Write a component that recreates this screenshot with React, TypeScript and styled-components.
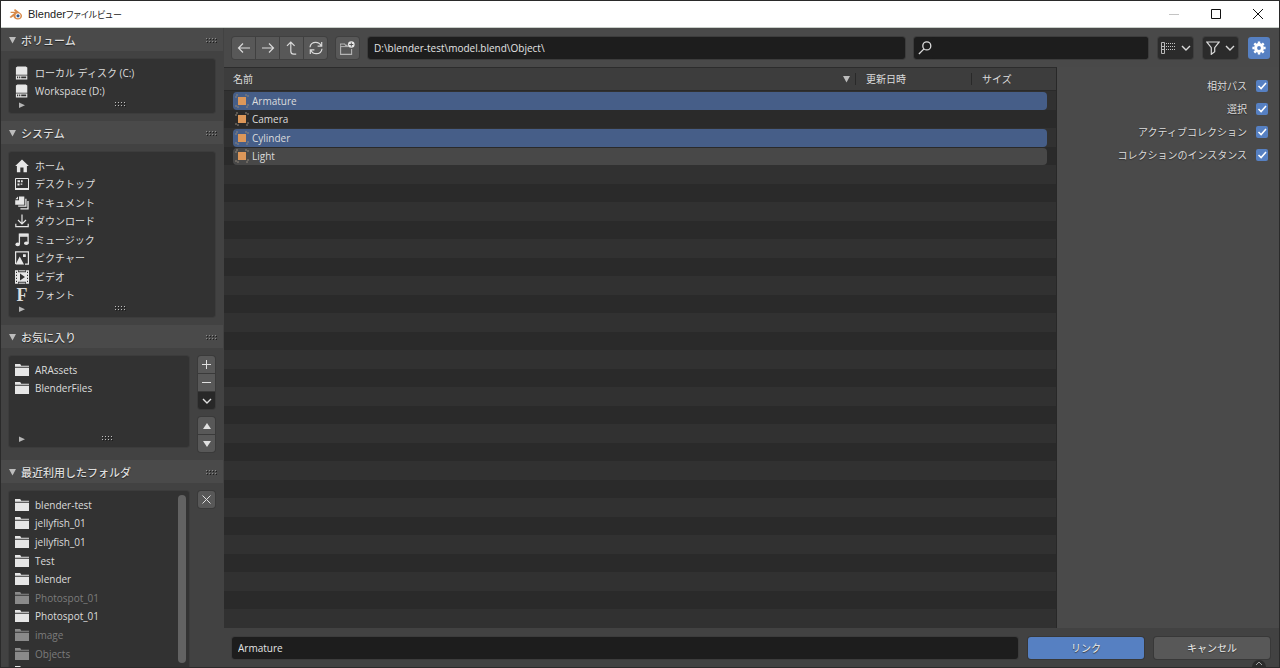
import React, { useState } from 'react';
import styled, { createGlobalStyle, css } from 'styled-components';

const GlobalStyle = createGlobalStyle`
  *, *::before, *::after { box-sizing: border-box; }
  body { margin: 0; background: #2a2a2a; }
  button, input, table { font: inherit; color: inherit; }
`;

const uiFont = '"Open Sans", "Noto Sans CJK JP", sans-serif';

/* ---------- window frame ---------- */

const Window = styled.div`
  display: flex;
  flex-direction: column;
  height: 100vh;
  border: 1px solid #2a2a2a;
  background: #424242;
  color: #dcdcdc;
  font: 10px/14px ${uiFont};
  overflow: hidden;
`;

const TitleBar = styled.header`
  display: flex;
  flex: none;
  align-items: center;
  height: 27px;
  padding-left: 8px;
  background: #fff;
  color: #222;
  border-bottom: 1px solid #c9cfc9;
`;

const WindowTitle = styled.h1`
  flex: 1;
  margin: 0 0 0 5px;
  font: 400 11px/16px "Liberation Sans", "Noto Sans CJK JP", sans-serif;
`;

const TitleKana = styled.span`
  font-size: 9px;
  font-feature-settings: "palt";
`;

const WindowButton = styled.button<{ $muted?: boolean }>`
  display: grid;
  place-items: center;
  width: 42px;
  height: 26px;
  padding: 0;
  border: 0;
  background: none;
  color: ${(p) => (p.$muted ? '#c4c4c4' : '#111')};
`;

const Body = styled.div`
  display: flex;
  flex: 1;
  min-height: 0;
`;

/* ---------- sidebar ---------- */

const Sidebar = styled.aside`
  flex: none;
  width: 222px;
  overflow: hidden;
`;

const PanelHeader = styled.h2`
  display: flex;
  align-items: center;
  gap: 5px;
  height: 23px;
  margin: 0;
  padding: 2px 6px 0 8px;
  background: #4a4a4a;
  font-size: 11px;
  font-weight: 500;
  line-height: 16px;
  text-shadow: 0 1px 1px #222;
`;

const PanelTitle = styled.span`
  flex: 1;
`;

const PanelBody = styled.div`
  display: flex;
  gap: 9px;
  align-items: flex-start;
  padding: 8px;
`;

const ListBox = styled.div`
  display: flex;
  flex: 1;
  align-items: flex-start;
  border-radius: 3px;
  background: #323232;
  box-shadow: 0 0 0 1px #3c3c3c;
`;

const ListColumn = styled.div`
  flex: 1;
  padding: 4px 0;
`;

const List = styled.ul<{ $height: number }>`
  display: grid;
  grid-auto-rows: 1fr;
  height: ${(p) => p.$height}px;
  margin: 0;
  padding: 0;
  list-style: none;
`;

const ListItem = styled.li<{ $dim?: boolean }>`
  display: flex;
  align-items: center;
  gap: 6px;
  padding: 1px 0 0 6px;
  white-space: nowrap;
  color: ${(p) => (p.$dim ? '#7c7c7c' : '#dcdcdc')};

  svg { color: ${(p) => (p.$dim ? '#8a8a8a' : '#e6e6e6')}; }
`;

const ListFooter = styled.div`
  display: flex;
  align-items: center;
  height: 9px;
  padding-left: 10px;
  color: #b5b5b5;
`;

const GripSlot = styled.span`
  display: flex;
  flex: 1;
  justify-content: center;
`;

const ScrollThumb = styled.div`
  width: 8px;
  height: 168px;
  margin: 4px 3px 0 0;
  border-radius: 4px;
  background: #626262;
`;

const SideButtons = styled.div`
  display: flex;
  flex-direction: column;
  gap: 8px;
  width: 17px;
`;

const SideGroup = styled.div`
  display: flex;
  flex-direction: column;
  gap: 1px;
  border-radius: 3px;
  overflow: hidden;
  box-shadow: 0 0 0 1px #3a3a3a;
  background: #3a3a3a;
`;

const SideButton = styled.button<{ $dark?: boolean }>`
  display: grid;
  place-items: center;
  height: 17px;
  padding: 0;
  border: 0;
  background: ${(p) => (p.$dark ? '#282828' : '#585858')};
  color: #e0e0e0;
`;

/* ---------- main area ---------- */

const Main = styled.main`
  display: flex;
  flex: 1;
  flex-direction: column;
  min-width: 0;
  margin-left: 1px;
`;

const Toolbar = styled.div`
  display: flex;
  flex: none;
  align-items: center;
  height: 39px;
  padding: 0 9px 0 8px;
  background: #494949;
`;

const buttonFace = css`
  display: flex;
  align-items: center;
  justify-content: center;
  height: 22px;
  padding: 0;
  border: 0;
  background: #585858;
  color: #dadada;
`;

const ButtonGroup = styled.div`
  display: flex;
  gap: 1px;
  margin-right: 9px;
  border-radius: 3px;
  overflow: hidden;
  background: #404040;
  box-shadow: 0 0 0 1px #404040;
`;

const ToolButton = styled.button`
  ${buttonFace}
  width: 23px;
`;

const MenuButton = styled.button`
  ${buttonFace}
  gap: 5px;
  width: 35px;
  margin-left: 10px;
  border-radius: 3px;
  background: #2b2b2b;
  box-shadow: 0 0 0 1px #3e3e3e;
`;

const SettingsButton = styled.button`
  ${buttonFace}
  width: 22px;
  margin-left: 10px;
  border-radius: 3px;
  background: #5680c2;
  color: #fff;
`;

const Field = styled.input`
  flex: 1;
  min-width: 0;
  height: 22px;
  padding: 0 6px;
  border: 0;
  border-radius: 3px;
  background: #1d1d1d;
  color: #e4e4e4;
  box-shadow: 0 0 0 1px #3c3c3c;
  outline: none;
`;

const PathSlot = styled.div`
  display: flex;
  flex: 540;
`;

const SearchSlot = styled.label`
  display: flex;
  flex: 232;
  align-items: center;
  margin-left: 9px;
  padding-left: 4px;
  border-radius: 3px;
  background: #1d1d1d;
  box-shadow: 0 0 0 1px #3c3c3c;

  ${Field} { box-shadow: none; }
`;

const Content = styled.div`
  display: flex;
  flex: 1;
  min-height: 0;
`;

const FileTable = styled.table`
  display: flex;
  flex: 1;
  flex-direction: column;
  border-top: 1px solid #2c2c2c;
  border-right: 1px solid #282828;
  text-align: left;
`;

const TableHead = styled.thead`
  display: block;
  flex: none;
  background: #3d3d3d;
  border-bottom: 1px solid #2a2a2a;
`;

const TableBody = styled.tbody`
  display: flex;
  flex: 1;
  flex-direction: column;
`;

const columns = css`
  display: grid;
  grid-template-columns: 1fr 116px 76px;
  padding: 0 9px;
`;

const HeadRow = styled.tr`
  ${columns}
  height: 22px;
  align-items: center;
`;

const HeadCell = styled.th`
  display: flex;
  align-items: center;
  justify-content: space-between;
  height: 12px;
  padding: 0;
  font-weight: 400;

  & + & {
    padding-left: 10px;
    border-left: 1px solid #292929;
  }
  &:first-child { padding-right: 5px; }
`;

type RowState = 'selected' | 'hover' | 'plain';

const rowColor: Record<RowState, string> = {
  selected: '#465e88',
  hover: '#484848',
  plain: 'transparent',
};

const FileRow = styled.tr<{ $state: RowState }>`
  ${columns}
  flex: 1;
  padding-top: 1px;
  background: #313131;

  &:nth-child(even) { background: #2a2a2a; }

  td {
    padding: 0;
    background: ${(p) => rowColor[p.$state]};
  }
  td:first-child { border-radius: 4px 0 0 4px; }
  td:last-child { border-radius: 0 4px 4px 0; }
`;

const NameCell = styled.span`
  display: flex;
  align-items: center;
  gap: 3px;
  height: 17px;
  padding-left: 2px;
`;

const Options = styled.form`
  flex: none;
  width: 222px;
  padding: 7px 11px;
  background: #4a4a4a;
`;

const Option = styled.label`
  display: flex;
  align-items: center;
  justify-content: flex-end;
  gap: 9px;
  height: 23px;
  text-shadow: 0 1px 1px #2c2c2c;
`;

const CheckSlot = styled.span`
  display: grid;
  place-items: center;

  > * { grid-area: 1 / 1; }
  svg { pointer-events: none; }
`;

const CheckBox = styled.input`
  appearance: none;
  width: 12px;
  height: 12px;
  margin: 0;
  border-radius: 2px;
  background: #353535;

  &:checked { background: #5680c2; }
`;

const ActionBar = styled.footer`
  display: flex;
  flex: none;
  align-items: center;
  gap: 10px;
  height: 39px;
  padding: 0 9px 0 8px;
  background: #424242;
`;

const ActionButton = styled.button<{ $primary?: boolean }>`
  ${buttonFace}
  width: 116px;
  border-radius: 3px;
  background: ${(p) => (p.$primary ? '#5680c2' : '#585858')};
  color: #eee;
  box-shadow: 0 0 0 1px #383838;
  text-shadow: 0 1px 1px #333;
`;

const RegionTab = styled.button`
  position: absolute;
  right: 14px;
  bottom: 1px;
  display: grid;
  place-items: center;
  width: 14px;
  height: 7px;
  padding: 0;
  border: 0;
  border-radius: 7px 7px 0 0;
  background: #2c2c2c;
  color: #a0a0a0;
`;

const FontGlyph = styled.span`
  width: 14px;
  text-align: center;
  font: 700 18px/14px "Liberation Serif", serif;
`;

/* ---------- drawings ---------- */

const Svg = ({ w = 14, h = 14, children }: { w?: number; h?: number; children: React.ReactNode }) => (
  <svg width={w} height={h} viewBox={`0 0 ${w} ${h}`} fill="none" stroke="currentColor" aria-hidden="true">
    {children}
  </svg>
);

const Solid = ({ d }: { d: string }) => <path d={d} fill="currentColor" stroke="none" fillRule="evenodd" />;

const Grip = ({ dark }: { dark?: boolean }) => (
  <svg width="11" height="5" viewBox="0 0 11 5" aria-hidden="true">
    {[0, 3, 6, 9].map((x) =>
      [0, 3].map((y) => (
        <g key={`${x}-${y}`}>
          <rect x={x} y={y} width="1" height="1" fill={dark ? '#8a8a8a' : '#bdbdbd'} />
          <rect x={x + 1} y={y + 1} width="1" height="1" fill="#1c1c1c" />
        </g>
      )),
    )}
  </svg>
);

const TriDown = () => (
  <svg width="7" height="7" viewBox="0 0 7 7" aria-hidden="true">
    <path d="M0 0h7L3.5 6.4z" fill="#bcbcbc" />
  </svg>
);
const TriRight = () => <Svg w={6} h={6}><Solid d="M0 0.5v5.5L6 3.2z" /></Svg>;
const ChevronDown = () => <Svg w={10} h={6}><path d="M1 1l4 4 4-4" strokeWidth="1.4" /></Svg>;

const FolderIcon = () => <Svg><Solid d="M0 1h5.2l1 1.7H14v1H0zM0 4.7h14V13H0z" /></Svg>;
const DriveIcon = () => (
  <Svg>
    <Solid d="M2.4.4h8.4l1.5 1v7.4H.9V1.4zM.9 9.4h11.4v4H.9zM2 10.6v1.6h1.2v-1.6zM4.1 10.6v1.6h1.2v-1.6zM6.2 10.6v1.6h5v-1.6z" />
  </Svg>
);
const HomeIcon = () => <Svg><Solid d="M7 .4L.2 7h1.7v6.3h3.4V8.5h3.2v4.8h3.4V7h1.9z" /></Svg>;
const DesktopIcon = () => (
  <Svg>
    <path d="M.5 1.5h13v10H.5z" />
    <Solid d="M2.5 3.3H5v2H2.5zM6 3.3h1.7v2H6zM2.5 6.6h2v2h-2zM5.6 6.6h1.7v1.2H5.6zM0 11h14v2H0z" />
  </Svg>
);
const DocumentsIcon = () => (
  <Svg>
    <Solid d="M4 .5h5.3v8.2H.2V4.3H4zM3 .6v2.7H.3z" />
    <path d="M10.9 2.8v7.4H3.2M13 5v7.8H5.4" strokeWidth="1.3" />
  </Svg>
);
const DownloadIcon = () => (
  <Svg><path d="M7 .5v9.3M3 6l4 4 4-4M.8 9.7v3h12.4v-3" strokeWidth="1.2" /></Svg>
);
const MusicIcon = () => (
  <Svg>
    <path d="M4.4 11V1.2h8.7v8.7M4.4 3h8.7" strokeWidth="1.3" />
    <path d="M4.4 1.8h8.7" strokeWidth="2" />
    <ellipse cx="2.7" cy="11.4" rx="2.3" ry="1.8" fill="currentColor" stroke="none" />
    <ellipse cx="11.3" cy="10.2" rx="2.3" ry="1.8" fill="currentColor" stroke="none" />
  </Svg>
);
const PictureIcon = () => (
  <Svg>
    <path d="M.6 13V.8h12.8v12.4H10" strokeWidth="1.2" />
    <Solid d="M.6 13.4L4.7 5.5l4.3 7.9zM8 3.2h2.8V6H8z" />
  </Svg>
);
const VideoIcon = () => (
  <Svg>
    <Solid d="M0 .3h3v2h8v-2h3v13.4h-3v-2H3v2H0zM1 1.7v1.4h1V1.7zM1 4.7v1.4h1V4.7zM1 7.7v1.4h1V7.7zM1 10.7v1.4h1v-1.4zM12 1.7v1.4h1V1.7zM12 4.7v1.4h1V4.7zM12 7.7v1.4h1V7.7zM12 10.7v1.4h1v-1.4zM5 3.6v6.8L10 7z" />
    <path d="M3.6.8h6.8M3.6 13.2h6.8" strokeWidth="1" />
  </Svg>
);

const ObjectIcon = () => (
  <Svg>
    <path d="M1 4V1h3M10 1h3v3M13 10v3h-3M4 13H1v-3" stroke="#8d8478" strokeDasharray="2 1" />
    <rect x="3" y="3" width="8" height="8" fill="#dc9759" stroke="none" />
  </Svg>
);

const BlenderLogo = () => (
  <svg width="14" height="12" viewBox="0 0 14 12" aria-hidden="true">
    <path d="M.6 8.9L5.3 5H1.6V3.7h5L4.9 2.2 6 1.1l5.9 4.4c1.6 1.4 1.5 3.7 0 5-1.6 1.4-4.6 1.4-6.2 0-.8-.7-1.2-1.5-1.2-2.3L1.9 10z" fill="#d98a4a" />
    <circle cx="9" cy="7.8" r="2.5" fill="#fff" />
    <circle cx="9" cy="7.8" r="1.6" fill="#2d5794" />
  </svg>
);

const ArrowLeft = () => <Svg><path d="M13 7H1.5M6 2.5L1.5 7 6 11.5" strokeWidth="1.2" /></Svg>;
const ArrowRight = () => <Svg><path d="M1 7h11.5M8 2.5L12.5 7 8 11.5" strokeWidth="1.2" /></Svg>;
const ArrowUp = () => <Svg><path d="M2 4.8L5.8 1l3.8 3.8M5.8 1v9.2q0 3 3 3h2.4" strokeWidth="1.2" /></Svg>;
const Refresh = () => (
  <Svg>
    <path d="M1 6.3C1.4 3 4 1.3 6.8 1.3c2.4 0 4.2 1.2 5.2 3.2M12.7 1v4.2H8.6M13 7.7c-.4 3.3-3 5-5.8 5-2.4 0-4.2-1.2-5.2-3.2M1.3 13V8.8h4.1" strokeWidth="1.2" />
  </Svg>
);
const NewFolder = () => (
  <Svg w={15}>
    <path d="M.6 4.2V3h4l1 1.4h2M.6 4.5v8.9h11V8" stroke="#b4b4b4" strokeWidth="1.1" />
    <path d="M1 5.6h7.6" stroke="#b4b4b4" />
    <circle cx="11.3" cy="3.5" r="3.3" fill="#e8e8e8" stroke="none" />
    <path d="M9.3 3.5h4M11.3 1.5v4" stroke="#555" />
  </Svg>
);
const SearchIcon = () => (
  <Svg><circle cx="8.8" cy="4.9" r="4" strokeWidth="1.3" /><path d="M6 7.9L.9 13" strokeWidth="1.3" /></Svg>
);
const DisplayIcon = () => (
  <Svg w={15}>
    <path d="M.5 1.5h3v11h-3zM.5 5.5h3M.5 8.5h3" stroke="#b8b8b8" />
    <path d="M5 2.5h10M5 5.5h10M5 8.5h10" strokeDasharray="1 1" stroke="#c4c4c4" />
  </Svg>
);
const FilterIcon = () => (
  <Svg><path d="M.8 1h12.4L8.7 6.6v4.2l-3.4 2.5V6.6z" strokeWidth="1.2" /></Svg>
);
const GearIcon = () => (
  <Svg>
    <circle cx="7" cy="7" r="3.4" strokeWidth="3" />
    <path
      d="M7 .4v2M7 11.6v2M.4 7h2M11.6 7h2M2.3 2.3l1.5 1.5M10.2 10.2l1.5 1.5M2.3 11.7l1.5-1.5M10.2 3.8l1.5-1.5"
      strokeWidth="2.4"
    />
  </Svg>
);

/* ---------- data ---------- */

const volumes = ['ローカル ディスク (C:)', 'Workspace (D:)'];

const systemFolders: [string, React.ReactNode][] = [
  ['ホーム', <HomeIcon />],
  ['デスクトップ', <DesktopIcon />],
  ['ドキュメント', <DocumentsIcon />],
  ['ダウンロード', <DownloadIcon />],
  ['ミュージック', <MusicIcon />],
  ['ピクチャー', <PictureIcon />],
  ['ビデオ', <VideoIcon />],
  ['フォント', <FontGlyph aria-hidden="true">F</FontGlyph>],
];

const favorites = ['ARAssets', 'BlenderFiles'];

const recents: { name: string; missing?: boolean }[] = [
  { name: 'blender-test' },
  { name: 'jellyfish_01' },
  { name: 'jellyfish_01' },
  { name: 'Test' },
  { name: 'blender' },
  { name: 'Photospot_01', missing: true },
  { name: 'Photospot_01' },
  { name: 'image', missing: true },
  { name: 'Objects', missing: true },
  { name: '' },
];

const files: { name: string; state: RowState }[] = [
  { name: 'Armature', state: 'selected' },
  { name: 'Camera', state: 'plain' },
  { name: 'Cylinder', state: 'selected' },
  { name: 'Light', state: 'hover' },
];

const optionLabels = ['相対パス', '選択', 'アクティブコレクション', 'コレクションのインスタンス'];
const visibleRows = 29;

/* ---------- composed parts ---------- */

const Panel = ({ title, children }: { title: string; children: React.ReactNode }) => (
  <section>
    <PanelHeader>
      <TriDown />
      <PanelTitle>{title}</PanelTitle>
      <Grip dark />
    </PanelHeader>
    <PanelBody>{children}</PanelBody>
  </section>
);

const Footer = () => (
  <ListFooter>
    <TriRight />
    <GripSlot><Grip /></GripSlot>
  </ListFooter>
);

const OptionRow = ({ label }: { label: string }) => {
  const [on, setOn] = useState(true);
  return (
    <Option>
      {label}
      <CheckSlot>
        <CheckBox type="checkbox" checked={on} onChange={() => setOn(!on)} />
        {on && <Svg w={10} h={10}><path d="M1.5 5l2.6 2.6L9 2" stroke="#fff" strokeWidth="1.5" /></Svg>}
      </CheckSlot>
    </Option>
  );
};

export default function App() {
  return (
    <Window>
      <GlobalStyle />
      <TitleBar>
        <BlenderLogo />
        <WindowTitle>Blender<TitleKana>ファイルビュー</TitleKana></WindowTitle>
        <WindowButton $muted aria-label="最小化"><Svg w={10} h={10}><path d="M0 5.5h10" /></Svg></WindowButton>
        <WindowButton aria-label="最大化"><Svg w={10} h={10}><path d="M.5.5h9v9h-9z" /></Svg></WindowButton>
        <WindowButton aria-label="閉じる"><Svg w={10} h={10}><path d="M0 0l10 10M10 0L0 10" /></Svg></WindowButton>
      </TitleBar>
      <Body>
        <Sidebar>
          <Panel title="ボリューム">
            <ListBox>
              <ListColumn>
                <List $height={37}>
                  {volumes.map((v) => <ListItem key={v}><DriveIcon />{v}</ListItem>)}
                </List>
                <Footer />
              </ListColumn>
            </ListBox>
          </Panel>
          <Panel title="システム">
            <ListBox>
              <ListColumn>
                <List $height={148}>
                  {systemFolders.map(([name, icon]) => <ListItem key={name}>{icon}{name}</ListItem>)}
                </List>
                <Footer />
              </ListColumn>
            </ListBox>
          </Panel>
          <Panel title="お気に入り">
            <ListBox>
              <ListColumn>
                <List $height={74}>
                  {favorites.map((f) => <ListItem key={f}><FolderIcon />{f}</ListItem>)}
                  <li />
                  <li />
                </List>
                <Footer />
              </ListColumn>
            </ListBox>
            <SideButtons>
              <SideGroup>
                <SideButton aria-label="追加"><Svg w={9} h={9}><path d="M0 4.5h9M4.5 0v9" /></Svg></SideButton>
                <SideButton aria-label="削除"><Svg w={9} h={9}><path d="M0 4.5h9" /></Svg></SideButton>
                <SideButton $dark aria-label="メニュー"><ChevronDown /></SideButton>
              </SideGroup>
              <SideGroup>
                <SideButton aria-label="上へ"><Svg w={8} h={6}><Solid d="M0 6h8L4 0z" /></Svg></SideButton>
                <SideButton aria-label="下へ"><Svg w={8} h={6}><Solid d="M0 0h8L4 6z" /></Svg></SideButton>
              </SideGroup>
            </SideButtons>
          </Panel>
          <Panel title="最近利用したフォルダ">
            <ListBox>
              <ListColumn>
                <List $height={186}>
                  {recents.map((r, i) => <ListItem key={i} $dim={r.missing}><FolderIcon />{r.name}</ListItem>)}
                </List>
              </ListColumn>
              <ScrollThumb />
            </ListBox>
            <SideButtons>
              <SideGroup>
                <SideButton aria-label="消去"><Svg w={9} h={9}><path d="M.5.5l8 8M8.5.5l-8 8" /></Svg></SideButton>
              </SideGroup>
            </SideButtons>
          </Panel>
        </Sidebar>
        <Main>
          <Toolbar>
            <ButtonGroup>
              <ToolButton aria-label="戻る"><ArrowLeft /></ToolButton>
              <ToolButton aria-label="進む"><ArrowRight /></ToolButton>
              <ToolButton aria-label="親フォルダ"><ArrowUp /></ToolButton>
              <ToolButton aria-label="更新"><Refresh /></ToolButton>
            </ButtonGroup>
            <ButtonGroup>
              <ToolButton aria-label="新規フォルダ"><NewFolder /></ToolButton>
            </ButtonGroup>
            <PathSlot>
              <Field aria-label="パス" defaultValue={'D:\\blender-test\\model.blend\\Object\\'} />
            </PathSlot>
            <SearchSlot>
              <SearchIcon />
              <Field aria-label="検索" />
            </SearchSlot>
            <MenuButton aria-label="表示設定"><DisplayIcon /><ChevronDown /></MenuButton>
            <MenuButton aria-label="フィルター"><FilterIcon /><ChevronDown /></MenuButton>
            <SettingsButton aria-label="設定"><GearIcon /></SettingsButton>
          </Toolbar>
          <Content>
            <FileTable>
              <TableHead>
                <HeadRow>
                  <HeadCell>名前<TriDown /></HeadCell>
                  <HeadCell>更新日時</HeadCell>
                  <HeadCell>サイズ</HeadCell>
                </HeadRow>
              </TableHead>
              <TableBody>
                {Array.from({ length: visibleRows }, (_, i) => {
                  const file = files[i];
                  return (
                    <FileRow key={i} $state={file ? file.state : 'plain'}>
                      <td>{file && <NameCell><ObjectIcon />{file.name}</NameCell>}</td>
                      <td />
                      <td />
                    </FileRow>
                  );
                })}
              </TableBody>
            </FileTable>
            <Options>
              {optionLabels.map((label) => <OptionRow key={label} label={label} />)}
            </Options>
          </Content>
          <ActionBar>
            <Field aria-label="ファイル名" defaultValue="Armature" />
            <ActionButton $primary>リンク</ActionButton>
            <ActionButton>キャンセル</ActionButton>
          </ActionBar>
        </Main>
      </Body>
      <RegionTab aria-label="領域を表示"><Svg w={8} h={5}><path d="M1 4l3-3 3 3" /></Svg></RegionTab>
    </Window>
  );
}
